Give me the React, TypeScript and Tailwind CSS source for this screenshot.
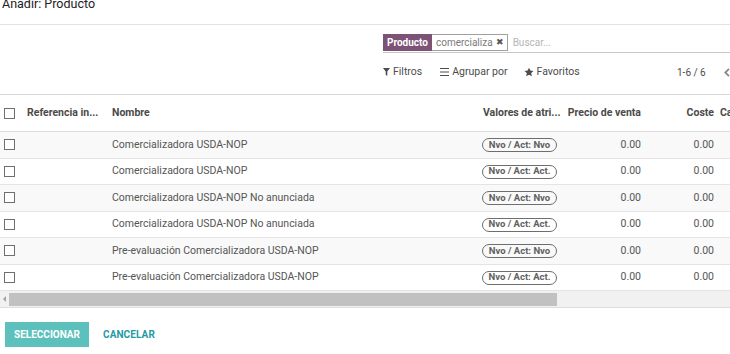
import React from "react";

const rows = [
  { name: "Comercializadora USDA-NOP", attr: "Nvo / Act: Nvo" },
  { name: "Comercializadora USDA-NOP", attr: "Nvo / Act: Act." },
  { name: "Comercializadora USDA-NOP No anunciada", attr: "Nvo / Act: Nvo" },
  { name: "Comercializadora USDA-NOP No anunciada", attr: "Nvo / Act: Act." },
  { name: "Pre-evaluación Comercializadora USDA-NOP", attr: "Nvo / Act: Nvo" },
  { name: "Pre-evaluación Comercializadora USDA-NOP", attr: "Nvo / Act: Act." },
];

function Box() {
  return <div className="w-[11px] h-[11px] border border-[#6f6f6f] bg-white" />;
}

export default function App() {
  return (
    <div
      className="w-[730px] h-[354px] overflow-hidden bg-white text-[#4c4c4c] flex flex-col"
      style={{ fontFamily: "Roboto, 'Noto Sans', sans-serif" }}
    >
      {/* header */}
      <div className="h-[25px] border-b border-[#e3e3e3] shrink-0">
        <div className="text-[12.5px] leading-none mt-[-2px] pl-[2px] text-[#222]">Añadir: Producto</div>
      </div>

      {/* control panel */}
      <div className="h-[69px] shrink-0 flex flex-col">
        <div className="ml-[383px] mt-[9px] h-[19px] border-b border-[#c8c8c8] flex items-start">
          <div className="flex h-[17px] items-stretch text-[10px]">
            <div className="bg-[#7c5276] text-white font-bold px-[4px] flex items-center">Producto</div>
            <div className="border border-[#a0a0a0] border-l-0 text-[#7a7a7a] pl-[4px] pr-[3px] flex items-center gap-[3px]">
              <span>comercializa</span>
              <span className="text-[#555] text-[9px]">✖</span>
            </div>
          </div>
          <div className="ml-[5px] h-[17px] flex items-center text-[10px] text-[#b5b5b5]">Buscar...</div>
        </div>
        <div className="flex items-center mt-[12px] h-[14px] text-[10.5px] text-[#4c4c4c]">
          <div className="ml-[383px] flex items-center gap-[2px]">
            <svg width="7" height="8" viewBox="0 0 7 8"><path d="M0 0h7L4.3 3.4V8L2.7 6.8V3.4z" fill="#4c4c4c" /></svg>
            <span className="ml-[1px]">Filtros</span>
          </div>
          <div className="ml-[18px] flex items-center gap-[3px]">
            <svg width="9" height="8" viewBox="0 0 9 8"><path d="M0 0.5h9M0 4h9M0 7.5h9" stroke="#4c4c4c" strokeWidth="1" /></svg>
            <span>Agrupar por</span>
          </div>
          <div className="ml-[16px] flex items-center gap-[3px]">
            <svg width="10" height="10" viewBox="0 0 24 24"><path d="M12 1.5l3.3 6.9 7.5 1-5.5 5.2 1.4 7.5L12 18.5l-6.7 3.6 1.4-7.5L1.2 9.4l7.5-1z" fill="#4c4c4c" /></svg>
            <span>Favoritos</span>
          </div>
          <div className="ml-auto w-[53px] flex items-center shrink-0">
            <span className="text-[10px]">1-6 / 6</span>
            <span className="ml-auto w-[6px] text-[#888] flex items-center">
              <svg width="6" height="9" viewBox="0 0 6 9"><path d="M5 0.8L1.3 4.5 5 8.2" stroke="#888" strokeWidth="1.8" fill="none" /></svg>
            </span>
          </div>
        </div>
      </div>

      {/* table */}
      <div className="border-t border-[#d6d6d6] shrink-0 overflow-hidden text-[10.5px]">
        <div className="w-[900px]">
          <div className="flex items-center h-[37px] font-bold text-[#4a4a4a] border-b border-[#dcdcdc] shadow-[0_1px_1px_rgba(0,0,0,0.06)]">
            <div className="w-[22px] pl-[4px]"><Box /></div>
            <div className="w-[85px] pl-[5px] whitespace-nowrap">Referencia in...</div>
            <div className="w-[370px] pl-[5px]">Nombre</div>
            <div className="w-[85px] pl-[6px] whitespace-nowrap">Valores de atri...</div>
            <div className="w-[84px] pr-[5px] text-right whitespace-nowrap">Precio de venta</div>
            <div className="w-[73px] pr-[5px] text-right">Coste</div>
            <div className="pl-[1px]">Cantidad</div>
          </div>
          {rows.map((r, i) => (
            <div
              key={i}
              className={`flex items-center h-[26.5px] border-b border-[#e4e4e4] text-[#555] ${i % 2 === 0 ? "bg-[#f9f9f9]" : "bg-white"}`}
            >
              <div className="w-[22px] pl-[4px]"><Box /></div>
              <div className="w-[85px] pl-[5px]"></div>
              <div className="w-[370px] pl-[5px]">{r.name}</div>
              <div className="w-[85px] pl-[5px]">
                <span className="inline-flex items-center h-[14px] w-[75px] justify-center rounded-full border-[1.5px] border-[#6e6e6e] text-[9.5px] font-bold text-[#606060] whitespace-nowrap">
                  {r.attr}
                </span>
              </div>
              <div className="w-[84px] pr-[5px] text-right">0.00</div>
              <div className="w-[73px] pr-[5px] text-right">0.00</div>
              <div className="pl-[1px]"></div>
            </div>
          ))}
        </div>
        {/* scrollbar */}
        <div className="h-[17px] bg-[#f1f1f1] border-b border-[#dedede] flex items-center">
          <div className="w-[9px] flex items-center justify-center">
            <svg width="3" height="6" viewBox="0 0 3 6"><path d="M3 0v6L0 3z" fill="#a3a3a3" /></svg>
          </div>
          <div className="w-[548px] h-[13px] bg-[#c1c1c1]" />
        </div>
      </div>

      {/* footer */}
      <div className="flex items-center pl-[5px] mt-[14px] gap-[14px]">
        <div className="h-[25px] w-[84px] bg-[#5cc1bd] text-white font-bold text-[10px] flex items-center justify-center">SELECCIONAR</div>
        <div className="text-[#1f9aa3] text-[10px] font-bold tracking-[0.1px]">CANCELAR</div>
      </div>
    </div>
  );
}
